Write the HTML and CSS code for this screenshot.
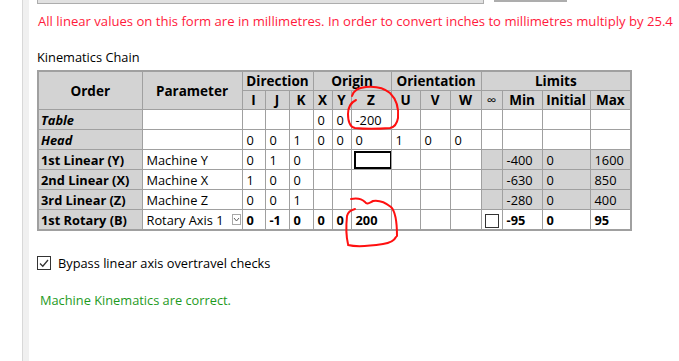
FILE: index.html
```html
<!DOCTYPE html>
<html lang="en">
<head>
  <meta charset="UTF-8">
  <title>Machine Kinematics</title>
  <link rel="stylesheet" href="styles.css">
</head>
<body>
  <div class="page">
    <div class="panel-edge"></div>
    <div class="content">
      <div class="top-buttons">
        <div class="top-btn wide"></div>
        <div class="top-btn small"></div>
      </div>
      <p class="notice">All linear values on this form are in millimetres. In order to convert inches to millimetres multiply by 25.4</p>
      <div class="section-title">Kinematics Chain</div>

      <table class="chain">
        <colgroup>
          <col style="width:104px"><col style="width:100px">
          <col style="width:23px"><col style="width:24px"><col style="width:24px">
          <col style="width:19px"><col style="width:19px"><col style="width:40px">
          <col style="width:29px"><col style="width:30px"><col style="width:31px">
          <col style="width:21px"><col style="width:40px"><col style="width:48px"><col style="width:41px">
        </colgroup>
        <thead>
          <tr>
            <th rowspan="2">Order</th>
            <th rowspan="2">Parameter</th>
            <th colspan="3">Direction</th>
            <th colspan="3">Origin</th>
            <th colspan="3">Orientation</th>
            <th colspan="4">Limits</th>
          </tr>
          <tr>
            <th>I</th><th>J</th><th>K</th>
            <th>X</th><th>Y</th><th>Z</th>
            <th>U</th><th>V</th><th>W</th>
            <th class="inf">∞</th><th>Min</th><th>Initial</th><th>Max</th>
          </tr>
        </thead>
        <tbody>
          <tr>
            <td class="order special">Table</td><td></td>
            <td></td><td></td><td></td>
            <td>0</td><td>0</td><td>-200</td>
            <td></td><td></td><td></td>
            <td></td><td></td><td></td><td></td>
          </tr>
          <tr>
            <td class="order special">Head</td><td></td>
            <td>0</td><td>0</td><td>1</td>
            <td>0</td><td>0</td><td>0</td>
            <td>1</td><td>0</td><td>0</td>
            <td></td><td></td><td></td><td></td>
          </tr>
          <tr>
            <td class="order">1st Linear (Y)</td><td>Machine Y</td>
            <td>0</td><td>1</td><td>0</td>
            <td></td><td></td><td class="selected"><div class="sel-box"></div></td>
            <td></td><td></td><td></td>
            <td class="lim"></td><td class="lim">-400</td><td class="lim">0</td><td class="lim">1600</td>
          </tr>
          <tr>
            <td class="order">2nd Linear (X)</td><td>Machine X</td>
            <td>1</td><td>0</td><td>0</td>
            <td></td><td></td><td></td>
            <td></td><td></td><td></td>
            <td class="lim"></td><td class="lim">-630</td><td class="lim">0</td><td class="lim">850</td>
          </tr>
          <tr>
            <td class="order">3rd Linear (Z)</td><td>Machine Z</td>
            <td>0</td><td>0</td><td>1</td>
            <td></td><td></td><td></td>
            <td></td><td></td><td></td>
            <td class="lim"></td><td class="lim">-280</td><td class="lim">0</td><td class="lim">400</td>
          </tr>
          <tr class="rotary">
            <td class="order">1st Rotary (B)</td>
            <td class="param-select">
              <span>Rotary Axis 1</span>
              <span class="drop">
                <svg width="9" height="11" viewBox="0 0 9 11"><rect x="0.5" y="0.5" width="8" height="10" fill="#fff" stroke="#a8a8a8"/><path d="M2 4 L4.5 7 L7 4" fill="none" stroke="#606060" stroke-width="1"/></svg>
              </span>
            </td>
            <td>0</td><td>-1</td><td>0</td>
            <td>0</td><td>0</td><td>200</td>
            <td></td><td></td><td></td>
            <td class="inf-cell"><span class="box"></span></td><td>-95</td><td>0</td><td>95</td>
          </tr>
        </tbody>
      </table>

      <label class="bypass">
        <span class="box checked">
          <svg width="12" height="12" viewBox="0 0 12 12"><path d="M2 6.5 L4.8 9.2 L10 3" fill="none" stroke="#333" stroke-width="1.3"/></svg>
        </span>
        Bypass linear axis overtravel checks
      </label>

      <p class="status">Machine Kinematics are correct.</p>
    </div>
  </div>

  <!-- red hand-drawn marks over the screenshot -->
  <svg class="marks" width="679" height="361" viewBox="0 0 679 361">
    <path d="M352 96 C354 90 358 88 366 87 C376 86 384 88 390 93 C396 99 399 108 398 118 C397 124 395 127 390 128 C378 129 364 129 355 128 C350 127 348 121 348 114 C348 108 350 103 356 100" />
    <path d="M351 199 C356 198 362 199 365 202 C367 205 369 203 373 201 C379 200 386 203 391 207 C396 212 397 222 397 236 M348 244 C346 236 346 226 347 216 C348 212 351 210 355 209 M348 245 C356 247 370 246 383 244 C390 243 394 241 396 237" />
  </svg>
</body>
</html>
```

FILE: styles.css
```css
body {
  margin: 0;
  background-color: #fff;
  font-family: "Open Sans", "Noto Sans", sans-serif;
  font-size: 12.8px;
  color: #000;
}
.page {
  display: flex;
  min-height: 361px;
}
.panel-edge {
  margin-left: 22px;
  width: 6px;
  border-left: 1px solid #d8d8d8;
  background-color: #f0f0f0;
}
.content {
  padding-left: 8px;
  flex-grow: 1;
}
.top-buttons {
  display: flex;
  gap: 10px;
}
.top-btn {
  box-sizing: border-box;
}
.top-btn.wide {
  width: 447px;
  height: 4px;
  background-color: #e1e1e1;
  border: 1px solid #adadad;
  border-top: none;
}
.top-btn.small {
  width: 73px;
  height: 2px;
  border-bottom: 2px solid #adadad;
}
.notice {
  margin: 9px 0 0 1px;
  color: #ff1a3c;
  font-size: 13.1px;
  line-height: 16px;
  white-space: nowrap;
}
.section-title {
  margin-top: 20px;
  line-height: 16px;
}
.chain {
  margin-top: 5px;
  border-collapse: collapse;
  table-layout: fixed;
  width: 594px;
  border: 2px solid #a0a0a0;
}
.chain th, .chain td {
  border: 1px solid #a0a0a0;
  height: 19px;
  padding: 0 0 0 4px;
  white-space: nowrap;
  overflow: hidden;
  text-align: left;
  line-height: 18px;
}
.chain th {
  height: 18px;
  background-color: #d3d3d3;
  text-align: center;
  padding: 0;
  font-size: 13.5px;
  font-weight: bold;
}
.chain th.inf {
  font-weight: normal;
}
.chain td.order {
  background-color: #d3d3d3;
  font-weight: bold;
  padding-left: 2px;
}
.chain td.special {
  font-style: italic;
}
.chain td.lim {
  background-color: #d3d3d3;
}
.chain td.selected {
  padding: 0 0 0 2px;
}
.sel-box {
  height: 14px;
  width: 34px;
  border: 2px solid #000;
}
.rotary td {
  font-weight: bold;
}
.rotary td.param-select {
  font-weight: normal;
  padding-right: 2px;
}
.param-select {
  position: relative;
}
.drop {
  position: absolute;
  right: 1px;
  top: 4px;
  line-height: 0;
}
.inf-cell {
  padding-left: 3px !important;
}
.box {
  display: inline-block;
  box-sizing: border-box;
  width: 14px;
  height: 14px;
  border: 1px solid #333;
  background-color: #fff;
  vertical-align: middle;
}
.bypass {
  display: flex;
  align-items: center;
  gap: 7px;
  margin-top: 24px;
  line-height: 16px;
}
.box.checked {
  display: flex;
  align-items: center;
  justify-content: center;
}
.status {
  margin: 21px 0 0 3px;
  color: #1e9a1e;
  line-height: 16px;
}
.marks {
  position: absolute;
  left: 0;
  top: 0;
  pointer-events: none;
}
.marks path {
  fill: none;
  stroke: #ff1010;
  stroke-width: 2;
  stroke-linecap: round;
}
```
